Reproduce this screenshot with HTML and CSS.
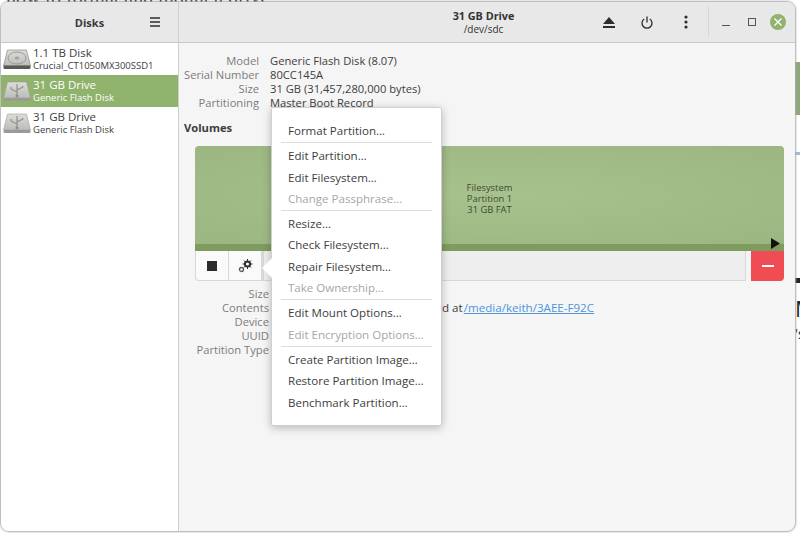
FILE: index.html
```html
<!DOCTYPE html>
<html>
<head>
    <title>Disks</title>
    <link rel="stylesheet" href="styles.css">
</head>
<body>
    <div class="backdrop">
        <div class="bg-text">how to format and mount a drive</div>
        <div class="bg-green"></div>
        <div class="bg-link"></div>
        <div class="bg-bar"></div>
        <div class="bg-big">M</div>
        <div class="bg-small">'s</div>
    </div>

    <div class="window">
        <aside class="sidebar">
            <header class="side-head">
                <span class="side-title">Disks</span>
                <svg class="burger" width="10" height="10" viewBox="0 0 10 10"><path d="M0 1h10M0 5h10M0 9h10" stroke="#2e2e2e" stroke-width="1.6"/></svg>
            </header>
            <ul class="disk-list">
                <li class="disk">
                    <svg class="disk-icon" width="30" height="24" viewBox="0 0 30 24"><use href="#hdd"/></svg>
                    <div class="disk-text"><div class="disk-name">1.1 TB Disk</div><div class="disk-sub">Crucial_CT1050MX300SSD1</div></div>
                </li>
                <li class="disk selected">
                    <svg class="disk-icon" width="30" height="24" viewBox="0 0 30 24"><use href="#usb"/></svg>
                    <div class="disk-text"><div class="disk-name">31 GB Drive</div><div class="disk-sub">Generic Flash Disk</div></div>
                </li>
                <li class="disk">
                    <svg class="disk-icon" width="30" height="24" viewBox="0 0 30 24"><use href="#usb"/></svg>
                    <div class="disk-text"><div class="disk-name">31 GB Drive</div><div class="disk-sub">Generic Flash Disk</div></div>
                </li>
            </ul>
        </aside>

        <main class="content">
            <header class="main-head">
                <div class="head-title">
                    <div class="drive-name">31 GB Drive</div>
                    <div class="drive-path">/dev/sdc</div>
                </div>
                <div class="head-actions">
                    <span class="slot"><svg width="14" height="13" viewBox="0 0 14 13"><path d="M7 1 13 8H1z M1 10h12v2H1z" fill="#2e2e2e"/></svg></span>
                    <span class="slot"><svg width="12" height="13" viewBox="0 0 12 13"><path d="M3.2 3a5 5 0 1 0 5.6 0M6 .5v6" fill="none" stroke="#2e2e2e" stroke-width="1.3"/></svg></span>
                    <span class="slot"><svg width="4" height="14" viewBox="0 0 4 14"><circle cx="2" cy="2" r="1.6" fill="#2e2e2e"/><circle cx="2" cy="7" r="1.6" fill="#2e2e2e"/><circle cx="2" cy="12" r="1.6" fill="#2e2e2e"/></svg></span>
                </div>
                <div class="win-controls">
                    <svg width="8" height="8" viewBox="0 0 8 8"><path d="M0 7.5h8" stroke="#555" stroke-width="1"/></svg>
                    <svg width="8" height="8" viewBox="0 0 8 8"><rect x=".5" y=".5" width="7" height="7" fill="none" stroke="#555"/></svg>
                    <span class="close"><svg width="8" height="8" viewBox="0 0 8 8"><path d="M.5.5l7 7M7.5.5l-7 7" stroke="#fff" stroke-width="1.4"/></svg></span>
                </div>
            </header>

            <div class="body">
                <dl class="props upper">
                    <dt>Model</dt><dd>Generic Flash Disk (8.07)</dd>
                    <dt>Serial Number</dt><dd>80CC145A</dd>
                    <dt>Size</dt><dd>31 GB (31,457,280,000 bytes)</dd>
                    <dt>Partitioning</dt><dd>Master Boot Record</dd>
                </dl>
                <div class="volumes-title">Volumes</div>
                <div class="volume-map">
                    <div class="partition">
                        <div>Filesystem</div>
                        <div>Partition 1</div>
                        <div>31 GB FAT</div>
                    </div>
                    <div class="usage">
                        <svg class="play" width="9" height="11" viewBox="0 0 9 11"><path d="M0 0l9 5.5-9 5.5z" fill="#111"/></svg>
                    </div>
                </div>
                <div class="toolbar">
                    <div class="tool-group">
                        <button class="tool"><span class="stop"></span></button>
                        <button class="tool">
                            <svg width="15" height="14" viewBox="0 0 15 14"><circle cx="9.5" cy="5" r="2.6" fill="none" stroke="#2e2e2e" stroke-width="2"/><path d="M9.5 0v10M4.5 5h10M6 1.5l7 7M13 1.5l-7 7" stroke="#2e2e2e" stroke-width="1"/><circle cx="9.5" cy="5" r="1.5" fill="#fff"/><circle cx="3.5" cy="10.5" r="2" fill="none" stroke="#555" stroke-width="1.3"/></svg>
                        </button>
                    </div>
                    <div class="tool-fill"></div>
                    <button class="delete"><span class="minus"></span></button>
                </div>
                <dl class="props lower">
                    <dt>Size</dt><dd>&nbsp;</dd>
                    <dt>Contents</dt><dd class="mounted">d at <a href="#">/media/keith/3AEE-F92C</a></dd>
                    <dt>Device</dt><dd>&nbsp;</dd>
                    <dt>UUID</dt><dd>&nbsp;</dd>
                    <dt>Partition Type</dt><dd>&nbsp;</dd>
                </dl>
            </div>
        </main>

        <div class="menu">
            <span class="menu-arrow"></span>
            <div class="menu-item">Format Partition…</div>
            <hr>
            <div class="menu-item">Edit Partition…</div>
            <div class="menu-item">Edit Filesystem…</div>
            <div class="menu-item off">Change Passphrase…</div>
            <hr>
            <div class="menu-item">Resize…</div>
            <div class="menu-item">Check Filesystem…</div>
            <div class="menu-item">Repair Filesystem…</div>
            <div class="menu-item off">Take Ownership…</div>
            <hr>
            <div class="menu-item">Edit Mount Options…</div>
            <div class="menu-item off">Edit Encryption Options…</div>
            <hr>
            <div class="menu-item">Create Partition Image…</div>
            <div class="menu-item">Restore Partition Image…</div>
            <div class="menu-item">Benchmark Partition…</div>
        </div>
    </div>

    <svg class="defs" width="0" height="0">
        <defs>
            <linearGradient id="case" x1="0" y1="0" x2="0" y2="1"><stop offset="0" stop-color="#dcdcd8"/><stop offset="1" stop-color="#bcbcb8"/></linearGradient>
            <g id="hdd">
                <path d="M5.5 3h19l4 16H1.500z" fill="url(#case)" stroke="#8a8a88" stroke-width=".7"/>
                <rect x="1.500" y="18.500" width="27" height="3.500" rx="1" fill="#5a5a55"/>
                <ellipse cx="15" cy="11" rx="9" ry="6" fill="none" stroke="#9a9a96"/>
                <ellipse cx="15" cy="11" rx="2.400" ry="1.600" fill="#a4a4a0"/>
            </g>
            <g id="usb">
                <path d="M5.5 3h19l4 16H1.500z" fill="url(#case)" stroke="#a0a09c" stroke-width=".6"/>
                <rect x="1.500" y="19" width="27" height="3" rx="1" fill="#9a9a96"/>
                <path d="M15 5v12M15 13l-6-3V8M15 11l6-3V7" fill="none" stroke="#8c8c88" stroke-width="1.100"/>
                <circle cx="15" cy="17" r="1.500" fill="#8c8c88"/>
            </g>
        </defs>
    </svg>
</body>
</html>
```

FILE: styles.css
```css
* {
    box-sizing: border-box;
}
html, body {
    margin: 0;
    height: 100%;
}
body {
    position: relative;
    overflow: hidden;
    background: #fff;
    font-family: "Open Sans", "Noto Sans", sans-serif;
    color: #3d3d3d;
}

/* page behind the window */
.bg-text {
    position: absolute;
    left: 6px;
    top: -14px;
    font: 20px "Liberation Serif", serif;
    color: #222;
    white-space: nowrap;
}
.bg-green {
    position: absolute;
    right: 0;
    top: 62px;
    width: 5px;
    height: 53px;
    background: #8fa67a;
}
.bg-link {
    position: absolute;
    right: 0;
    top: 152px;
    width: 5px;
    height: 3px;
    background: #9dbbdc;
}
.bg-bar {
    position: absolute;
    right: 0;
    top: 278px;
    width: 5px;
    height: 5px;
    background: #222;
}
.bg-big {
    position: absolute;
    left: 795px;
    top: 296px;
    font-size: 22px;
    line-height: 24px;
    color: #222;
}
.bg-small {
    position: absolute;
    left: 795px;
    top: 326px;
    font-size: 14px;
    line-height: 16px;
    color: #222;
}

.window {
    position: absolute;
    left: 1px;
    top: 2px;
    width: 794px;
    height: 529px;
    display: flex;
    background: #f5f5f5;
    border-radius: 8px;
    box-shadow: 0 0 2px 1px #a8a8a8;
    overflow: hidden;
}
.sidebar {
    width: 178px;
    flex: none;
    display: flex;
    flex-direction: column;
    background: #fff;
    border-right: 1px solid #cfcfcf;
}
.side-head {
    height: 41px;
    flex: none;
    position: relative;
    display: flex;
    align-items: center;
    justify-content: center;
    background: #e8e8e8;
    border-bottom: 1px solid #c8c8c8;
}
.side-title {
    font-size: 11px;
    font-weight: 700;
    color: #3a3a3a;
}
.burger {
    position: absolute;
    left: 149px;
    top: 15px;
}
.disk-list {
    list-style: none;
    margin: 0;
    padding: 0;
}
.disk {
    height: 32px;
    display: flex;
    align-items: center;
    gap: 1px;
    padding-left: 1px;
}
.disk.selected {
    background: #8fb26d;
    color: #fff;
}
.disk-name {
    font-size: 11.5px;
    line-height: 13px;
}
.disk-sub {
    font-size: 9.5px;
    line-height: 13px;
}
.content {
    flex: 1;
    min-width: 0;
    display: flex;
    flex-direction: column;
}
.main-head {
    height: 41px;
    flex: none;
    position: relative;
    display: flex;
    align-items: center;
    justify-content: flex-end;
    background: #e8e8e8;
    border-bottom: 1px solid #c8c8c8;
}
.head-title {
    position: absolute;
    left: 252px;
    width: 105px;
    text-align: center;
    color: #333;
}
.drive-name {
    font-size: 10.8px;
    font-weight: 700;
    line-height: 14px;
}
.drive-path {
    font-size: 10px;
    line-height: 12px;
}
.head-actions {
    display: flex;
    align-items: center;
    padding-right: 3px;
    border-right: 1px solid #d6d6d6;
    height: 30px;
}
.slot {
    width: 38.5px;
    display: flex;
    align-items: center;
    justify-content: center;
}
.win-controls {
    display: flex;
    align-items: center;
    gap: 18px;
    padding: 0 9px 0 12.5px;
}
.close {
    width: 16px;
    height: 16px;
    margin-left: -3.5px;
    display: flex;
    align-items: center;
    justify-content: center;
    border-radius: 50%;
    background: #8fb26d;
}
.body {
    padding: 11px 11px 0 16px;
}
.props {
    display: grid;
    margin: 0;
    font-size: 11.2px;
    line-height: 14px;
    white-space: nowrap;
}
.props dt {
    text-align: right;
    color: #7c7c7c;
}
.props dd {
    margin: 0;
}
.upper {
    grid-template-columns: 75px 1fr;
    column-gap: 11px;
    margin-left: -11px;
}
.volumes-title {
    margin: 9.5px 0 0 -11px;
    font-size: 11.2px;
    line-height: 15px;
    font-weight: 700;
}
.volume-map {
    height: 105px;
    margin-top: 11.5px;
    display: flex;
    flex-direction: column;
    border-radius: 4px 4px 0 0;
    overflow: hidden;
}
.partition {
    flex: 1;
    display: flex;
    flex-direction: column;
    justify-content: center;
    padding-top: 7px;
    font-size: 9.4px;
    line-height: 11px;
    text-align: center;
    color: #3f4a35;
    background: radial-gradient(ellipse at 50% 50%, #a8c28e 0%, #9cb682 100%);
}
.usage {
    height: 7px;
    position: relative;
    background: #7e9c60;
}
.play {
    position: absolute;
    right: 4px;
    bottom: 2px;
}
.toolbar {
    height: 30px;
    display: flex;
}
.tool-group {
    display: flex;
    background: #fafafa;
    border: 1px solid #d8d8d8;
    border-top: 0;
    border-radius: 0 0 0 4px;
}
.tool {
    width: 33px;
    padding: 0;
    display: flex;
    align-items: center;
    justify-content: center;
    background: none;
    border: 0;
    border-right: 1px solid #d8d8d8;
}
.stop {
    width: 10px;
    height: 10px;
    background: #2a2a2a;
}
.tool-fill {
    flex: 1;
    background: #eeeeee;
    border: 1px solid #d8d8d8;
    border-top: 0;
}
.delete {
    width: 33px;
    margin-left: 5px;
    padding: 0;
    display: flex;
    align-items: center;
    justify-content: center;
    background: #f04c54;
    border: 0;
    border-radius: 0 0 4px 0;
}
.minus {
    width: 12px;
    height: 2px;
    background: #fff;
}
.lower {
    margin-top: 6px;
    grid-template-columns: 74px 1fr;
    column-gap: 11px;
}
.mounted {
    padding-left: 162px;
    font-size: 11.6px;
}
.mounted a {
    margin-left: -2px;
    color: #4f94dc;
}
.menu {
    position: absolute;
    left: 270px;
    top: 105px;
    width: 171px;
    height: 319px;
    padding: 12px 9px 0;
    background: #fff;
    border: 1px solid #d0d0d0;
    border-radius: 2px;
    box-shadow: 0 2px 8px rgba(0, 0, 0, .25);
}
.menu-arrow {
    position: absolute;
    left: -7px;
    top: 153px;
    width: 14px;
    height: 14px;
    background: #fff;
    transform: rotate(45deg);
}
.menu-item {
    position: relative;
    height: 21.3px;
    padding-left: 7px;
    font-size: 11.55px;
    line-height: 21px;
    color: #3d3d3d;
}
.menu-item.off {
    color: #a6a6a6;
}
.menu hr {
    height: 1px;
    margin: 1px 0 2px;
    border: 0;
    background: #dcdcdc;
}
.defs {
    position: absolute;
}
```
